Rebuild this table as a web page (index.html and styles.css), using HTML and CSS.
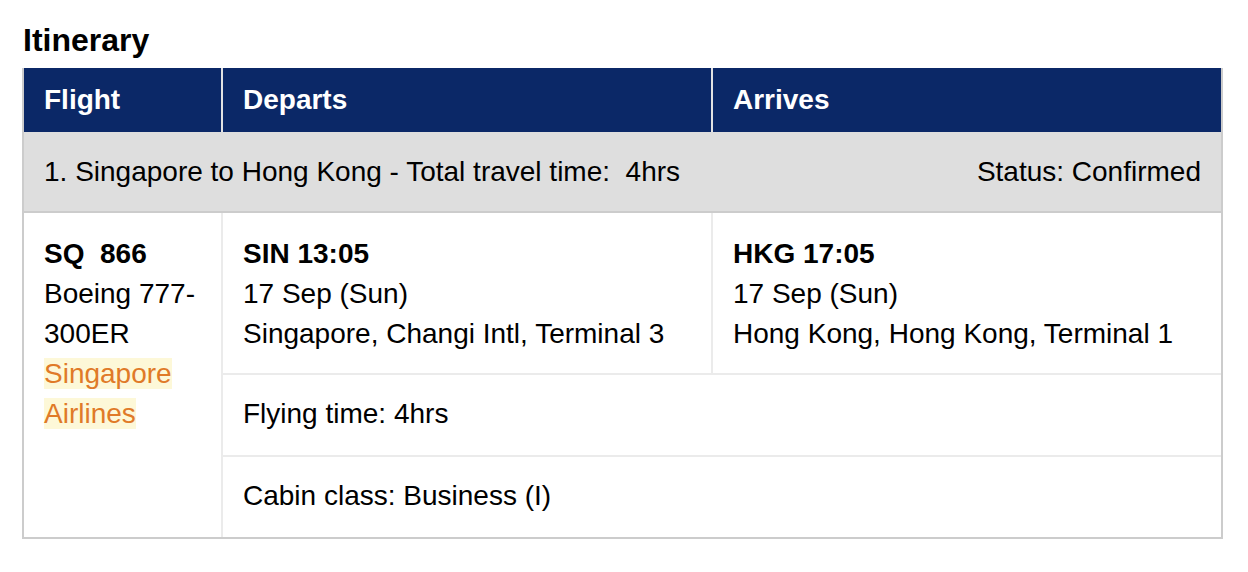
FILE: index.html
```html
<!DOCTYPE html>
<html>
<head>
<meta charset="utf-8">
<link rel="stylesheet" href="styles.css">
</head>
<body>
<div class="page">
  <h2 class="title">Itinerary</h2>
  <table class="itin">
    <colgroup>
      <col class="c-flight">
      <col class="c-dep">
      <col class="c-arr">
    </colgroup>
    <thead>
      <tr>
        <th>Flight</th>
        <th class="divided">Departs</th>
        <th class="divided">Arrives</th>
      </tr>
    </thead>
    <tbody>
      <tr class="segment">
        <td colspan="3">
          <div class="seg-line">
            <span class="pre">1. Singapore to Hong Kong - Total travel time:  4hrs</span>
            <span>Status: Confirmed</span>
          </div>
        </td>
      </tr>
      <tr class="main">
        <td rowspan="3" class="flight">
          <div class="bold pre">SQ  866</div>
          <div>Boeing 777-300ER</div>
          <div><span class="airline">Singapore Airlines</span></div>
        </td>
        <td class="divided">
          <div class="bold">SIN 13:05</div>
          <div>17 Sep (Sun)</div>
          <div>Singapore, Changi Intl, Terminal 3</div>
        </td>
        <td class="divided">
          <div class="bold">HKG 17:05</div>
          <div>17 Sep (Sun)</div>
          <div>Hong Kong, Hong Kong, Terminal 1</div>
        </td>
      </tr>
      <tr>
        <td colspan="2" class="divided ruled">Flying time: 4hrs</td>
      </tr>
      <tr>
        <td colspan="2" class="divided ruled">Cabin class: Business (I)</td>
      </tr>
    </tbody>
  </table>
</div>
</body>
</html>
```

FILE: styles.css
```css
html, body {
  margin: 0;
  padding: 0;
  background: #ffffff;
}

body {
  font-family: "Liberation Sans", Arial, Helvetica, sans-serif;
  color: #000;
}

.page {
  padding: 22px 0 0 22px;
}

.title {
  margin: 0 0 10px 1px;
  font-size: 32px;
  line-height: 36px;
  font-weight: bold;
}

.itin {
  border-collapse: separate;
  border-spacing: 0;
  width: 1201px;
  table-layout: fixed;
  border: 2px solid #cccccc;
  border-top: 0;
  font-size: 28px;
  line-height: 40px;
}

.c-flight { width: 197px; }
.c-dep { width: 490px; }
.c-arr { width: auto; }

.itin th {
  background: #0b2867;
  color: #ffffff;
  text-align: left;
  font-weight: bold;
  padding: 12px 20px;
}

.itin th.divided {
  border-left: 2px solid #e2e2e2;
}

.itin td {
  padding: 21px 20px 19px;
  vertical-align: top;
}

.itin td.divided {
  border-left: 2px solid #ebebeb;
}

.itin td.ruled {
  border-top: 2px solid #ebebeb;
  padding: 19px 20px 21px;
}

.itin .segment td {
  background: #dedede;
  padding: 20px 20px 19px;
  border-bottom: 2px solid #cccccc;
}

.seg-line {
  display: flex;
  justify-content: space-between;
}

.pre {
  white-space: pre;
}

.bold {
  font-weight: bold;
}

.flight {
  word-wrap: break-word;
}

.airline {
  background: #fdf8d8;
  color: #e07a28;
}
```
